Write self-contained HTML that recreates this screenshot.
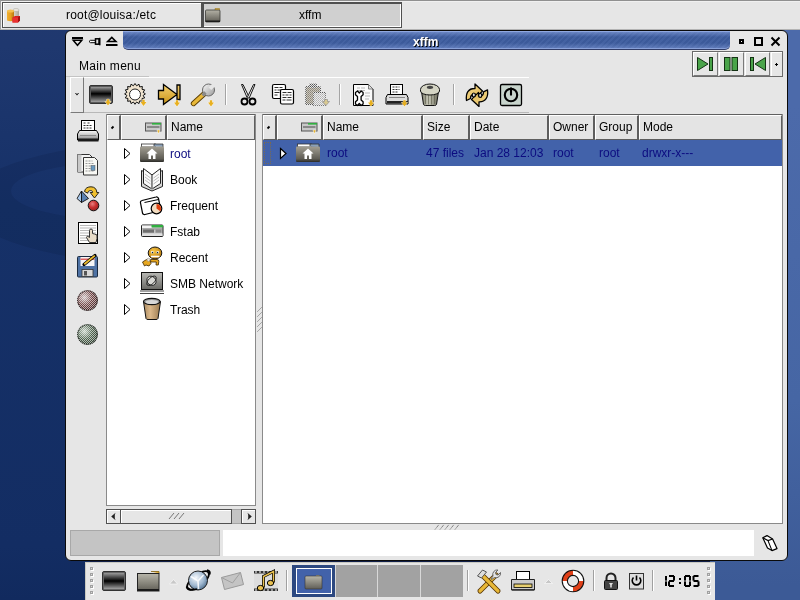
<!DOCTYPE html>
<html><head><meta charset="utf-8">
<style>
*{margin:0;padding:0;box-sizing:border-box}
html,body{width:800px;height:600px;overflow:hidden}
body{position:relative;font-family:"Liberation Sans",sans-serif;font-size:12px;color:#000;
background:#101e48}
.a{position:absolute}
svg{position:absolute;overflow:visible}
.t{position:absolute;white-space:nowrap;line-height:14px;will-change:transform}
.hd{position:absolute;top:0;height:25px;background:#e4e4e4;border-top:1px solid #fff;border-left:1px solid #fff;border-right:2px solid #5e5e5e;border-bottom:1px solid #5e5e5e}
.tri{position:absolute;width:0;height:0;border-top:5px solid transparent;border-bottom:5px solid transparent;border-left:6px solid #000}
.tri:after{content:"";position:absolute;left:-5px;top:-3px;border-top:3px solid transparent;border-bottom:3px solid transparent;border-left:3.5px solid #fff}
.lb{position:absolute;color:#000;line-height:14px;white-space:nowrap;will-change:transform}
.bl{color:#0c0c80}
</style></head><body>

<div class="a" style="left:0;top:0;width:90px;height:600px;background:linear-gradient(to bottom,#21396f 0px,#1f386f 45px,#163168 205px,#132d63 545px,#112a5e 600px)"></div>
<div class="a" style="left:710px;top:0;width:90px;height:600px;background:linear-gradient(to bottom,#4c6aaa 0px,#4c6aaa 105px,#4666a4 400px,#3c5a96 585px,#3c5a96 600px)"></div>
<svg style="left:0;top:0" width="66" height="600" viewBox="0 0 66 600"><path d="M-35 203a209 62 0 1 0 418 0a209 62 0 1 0-418 0zM11 191a100 28 0 1 0 200 0a100 28 0 1 0-200 0z" fill="#000820" fill-rule="evenodd" opacity=".1"/></svg>
<!-- ============ top panel ============ -->
<div class="a" style="left:0;top:0;width:800px;height:30px;background:#e6e6e6;border-top:1px solid #909090;border-left:1px solid #a0a0a0;border-bottom:1px solid #b4b4b4;box-shadow:inset 1px 1px 0 #f0f0f0"></div>
<div class="a" style="left:2px;top:2px;width:200px;height:26px;border:1px solid #505050;background:#e6e6e6;box-shadow:inset 1px 1px 0 #fff"></div>
<div class="a" style="left:202px;top:2px;width:200px;height:26px;border:1px solid #505050;background:#d0d0d0;box-shadow:inset 1px 1px 0 #505050,inset -1px -1px 0 #fff"></div>
<div class="t" style="left:66px;top:8px;letter-spacing:.2px">root@louisa:/etc</div>
<div class="t" style="left:299px;top:8px">xffm</div>
<!-- terminal-ish icon -->
<svg style="left:0;top:0" width="30" height="30" viewBox="0 0 30 30">
 <defs><linearGradient id="gOr" x1="0" y1="0" x2="1" y2="0"><stop offset="0" stop-color="#f0b030"/><stop offset=".5" stop-color="#e8a020"/><stop offset="1" stop-color="#b87810"/></linearGradient>
 <linearGradient id="gGy" x1="0" y1="0" x2="1" y2="0"><stop offset="0" stop-color="#e0dcd0"/><stop offset="1" stop-color="#a8a498"/></linearGradient></defs>
 <path d="M13 10v8h6v-8z" fill="url(#gGy)"/><ellipse cx="16" cy="10" rx="3" ry="1.6" fill="#e8e4dc" stroke="#a09c90" stroke-width=".4"/>
 <path d="M7 11v9.5q3.5 1.5 7 0V11z" fill="url(#gOr)"/><ellipse cx="10.5" cy="11" rx="3.5" ry="1.5" fill="#f4c050"/>
 <path d="M12.5 17.5l2.5-1.5h5v4.5l-2 2h-5.5z" fill="#d82020"/>
 <path d="M12.5 17.5h5.5v5h-5.5z" fill="#e83030"/>
 <path d="M18 17.5l2-1.5v4.5l-2 2z" fill="#a01010"/>
</svg>
<svg style="left:204px;top:7px" width="18" height="16" viewBox="0 0 18 16">
 <defs><linearGradient id="gTf" x1="0" y1="0" x2="0" y2="1"><stop offset="0" stop-color="#b4b2a6"/><stop offset="1" stop-color="#5e5c54"/></linearGradient></defs>
 <path d="M11 1.5h4.5v2h-4.5z" fill="#e8b840" stroke="#8a6a10" stroke-width=".5"/>
 <rect x="1.5" y="3" width="14.5" height="12" rx="1" fill="url(#gTf)" stroke="#3a3a36" stroke-width=".8"/>
 <rect x="1.5" y="13.5" width="14.5" height="1.5" fill="#1a1a1a"/>
</svg>

<!-- ============ window ============ -->
<div class="a" style="left:65px;top:30px;width:723px;height:531px;background:#e6e6e6;border:1px solid #0a0a0a;border-radius:6px"></div>
<!-- title bar -->
<div class="a" style="left:123px;top:31px;width:607px;height:19px;border-radius:0 0 5px 5px;background:linear-gradient(to bottom,rgba(140,165,225,.55) 0px,rgba(140,165,225,0) 5px,rgba(140,165,225,0) 11px,rgba(140,165,225,.5) 17px),repeating-linear-gradient(135deg,#3c5a9a 0 2px,#4462a2 2px 4px);border-top:1px solid #90a8e0;border-bottom:1px solid #303c68;box-shadow:inset 0 -1px 0 #88a0d8"></div>
<div class="t" style="left:413px;top:35px;color:#fff;font-weight:bold;text-shadow:1px 1px 0 #000">xffm</div>
<!-- title left icons -->
<svg style="left:71px;top:36px" width="14" height="12" viewBox="0 0 14 12">
 <rect x="1" y="1" width="11" height="2" fill="#000"/>
 <path d="M2.2 4.3h8.6L6.5 9.3z" fill="none" stroke="#000" stroke-width="1.5" stroke-linejoin="miter"/>
</svg>
<svg style="left:88px;top:37px" width="14" height="10" viewBox="0 0 14 10">
 <path d="M1 4.5L2.5 3.3H7.5V5.7H2.5Z" fill="#fff" stroke="#000" stroke-width="1"/>
 <rect x="7.5" y="1.8" width="3.5" height="5.4" fill="#ddd" stroke="#000" stroke-width="1.5"/>
 <rect x="11" y=".8" width="1.5" height="7.5" fill="#000"/>
</svg>
<svg style="left:105px;top:36px" width="14" height="12" viewBox="0 0 14 12">
 <path d="M2.6 5.6h8.4L6.8 1.4z" fill="none" stroke="#000" stroke-width="1.5"/>
 <rect x="1" y="8" width="11.5" height="2" fill="#000"/>
</svg>
<!-- title right buttons -->
<div class="a" style="left:739px;top:39px;width:5px;height:5px;border:2px solid #000;background:#fff"></div>
<div class="a" style="left:754px;top:37px;width:9px;height:9px;border:2px solid #000"></div>
<svg style="left:770px;top:36px" width="12" height="11" viewBox="0 0 12 11">
 <path d="M1.5 1.5l8 8M9.5 1.5l-8 8" stroke="#000" stroke-width="2"/>
</svg>

<div class="t" style="left:79px;top:59px;letter-spacing:.3px">Main menu</div>
<div class="a" style="left:66px;top:76px;width:83px;height:1px;background:#c4c4c4"></div>

<!-- media buttons -->
<div class="a" style="left:692px;top:51px;width:91px;height:26px;border:1px solid #6a6a6a;background:#e6e6e6"></div>
<div class="a" style="left:693px;top:52px;width:25px;height:24px;border-top:1px solid #fff;border-left:1px solid #fff;border-right:1px solid #7a7a7a;border-bottom:1px solid #7a7a7a"></div>
<div class="a" style="left:719px;top:52px;width:25px;height:24px;border-top:1px solid #fff;border-left:1px solid #fff;border-right:1px solid #7a7a7a;border-bottom:1px solid #7a7a7a"></div>
<div class="a" style="left:745px;top:52px;width:25px;height:24px;border-top:1px solid #fff;border-left:1px solid #fff;border-right:1px solid #7a7a7a;border-bottom:1px solid #7a7a7a"></div>
<div class="a" style="left:771px;top:52px;width:11px;height:24px;border-top:1px solid #fff;border-left:1px solid #fff"></div>
<div class="a" style="left:775px;top:64px;width:3px;height:1px;background:#000"></div><div class="a" style="left:776px;top:63px;width:1px;height:3px;background:#000"></div>
<svg style="left:696px;top:56px" width="80" height="16" viewBox="0 0 80 16">
 <path d="M1.5 1.5L12 8L1.5 14.5z" fill="#4aa44a" stroke="#143214" stroke-width="1"/>
 <rect x="13.5" y="1.5" width="3" height="13" fill="#4aa44a" stroke="#143214" stroke-width="1"/>
 <rect x="28.5" y="1.5" width="5.5" height="13" fill="#4aa44a" stroke="#143214" stroke-width="1"/>
 <rect x="36" y="1.5" width="5.5" height="13" fill="#4aa44a" stroke="#143214" stroke-width="1"/>
 <rect x="54.5" y="1.5" width="3" height="13" fill="#4aa44a" stroke="#143214" stroke-width="1"/>
 <path d="M69.5 1.5L59 8L69.5 14.5z" fill="#4aa44a" stroke="#143214" stroke-width="1"/>
</svg>

<!-- toolbar -->
<div class="a" style="left:70px;top:77px;width:14px;height:36px;border-top:1px solid #fff;border-left:1px solid #fff;border-right:1px solid #7a7a7a;border-bottom:1px solid #7a7a7a"></div>
<svg style="left:75px;top:93px" width="4" height="3" viewBox="0 0 4 3"><path d="M0 0h1l1 1.2l1-1.2h1l-2 2.5z" fill="#000"/></svg>
<div class="a" style="left:84px;top:77px;width:445px;height:1px;background:#fff"></div>
<div class="a" style="left:84px;top:112px;width:445px;height:1px;background:#b8b8b8"></div>
<svg style="left:0;top:0" width="800" height="120" viewBox="0 0 800 120">
 <defs>
  <linearGradient id="gTerm" x1="0" y1="0" x2="0" y2="1">
   <stop offset="0" stop-color="#9a9a9a"/><stop offset=".45" stop-color="#000"/><stop offset="1" stop-color="#a0a0a0"/>
  </linearGradient>
  <linearGradient id="gGold" x1="0" y1="0" x2="0" y2="1">
   <stop offset="0" stop-color="#f4d070"/><stop offset="1" stop-color="#c89418"/>
  </linearGradient>
  <g id="arr"><path d="M1.8 .3h2.4v2.2h1.8L3 6.5L0 2.5h1.8z" fill="#e8b020" stroke="#fff" stroke-width=".7" paint-order="stroke"/></g>
 </defs>
 <!-- terminal -->
 <rect x="89.5" y="85.5" width="23" height="18" rx="1.5" fill="#5a5a5a" stroke="#333" stroke-width="1"/>
 <rect x="91" y="87" width="20" height="15" fill="url(#gTerm)"/>
 <use href="#arr" x="105" y="99"/>
 <!-- gear -->
 <path d="M135 83.5l1.6 2.3 2.4-1.6.6 2.7 2.8-.4-.4 2.8 2.7.6-1.6 2.4 2.3 1.6-2.3 1.6 1.6 2.4-2.7.6.4 2.8-2.8-.4-.6 2.7-2.4-1.6-1.6 2.3-1.6-2.3-2.4 1.6-.6-2.7-2.8.4.4-2.8-2.7-.6 1.6-2.4-2.3-1.6 2.3-1.6-1.6-2.4 2.7-.6-.4-2.8 2.8.4.6-2.7 2.4 1.6z" fill="#f0e4d0" stroke="#111" stroke-width="1"/>
 <circle cx="135" cy="94.5" r="5.5" fill="#fff" stroke="#222" stroke-width="1"/>
 <use href="#arr" x="140.5" y="99.5"/>
 <!-- jump -->
 <path d="M158.5 90.5H163.5V84.5L177 94.5V85H180V99.5H177V94.5L163.5 104.5V99H158.5Z" fill="url(#gGold)" stroke="#000" stroke-width="1.3" stroke-linejoin="miter"/>
 <use href="#arr" x="174" y="100"/>
 <!-- wrench -->
 <defs><linearGradient id="gSil" x1="0" y1="0" x2="1" y2="1"><stop offset="0" stop-color="#fafafa"/><stop offset="1" stop-color="#9a9a9a"/></linearGradient></defs>
 <path d="M193.5 103.5l11-10" stroke="#5a3c00" stroke-width="5.4" stroke-linecap="round"/>
 <path d="M193.5 103.5l11-10" stroke="#e8b838" stroke-width="3.6" stroke-linecap="round"/>
 <circle cx="208.5" cy="90" r="6" fill="url(#gSil)" stroke="#666" stroke-width="1"/>
 <rect x="209.8" y="80" width="3.8" height="9.5" fill="#e6e6e6" transform="rotate(45 211.7 87)"/>
 <path d="M202.5 95.5l3-3" stroke="#8a8a8a" stroke-width="3.2"/>
 <use href="#arr" x="208" y="100"/>
 <!-- sep -->
 <rect x="225" y="84" width="1" height="21" fill="#a4a4a4"/><rect x="226" y="84" width="1" height="21" fill="#fff"/>
 <!-- scissors -->
 <path d="M241.5 84.5l1.5 0 6 12.5-1.5 1.5z" fill="#fff" stroke="#111" stroke-width="1"/>
 <path d="M255 84.5l-1.5 0-6 12.5 1.5 1.5z" fill="#fff" stroke="#111" stroke-width="1"/>
 <circle cx="244.5" cy="101.5" r="3" fill="none" stroke="#000" stroke-width="1.8"/>
 <circle cx="252.5" cy="101.5" r="3" fill="none" stroke="#000" stroke-width="1.8"/>
 <!-- copy -->
 <rect x="272.5" y="84.5" width="13" height="14" rx="1.5" fill="#fff" stroke="#000" stroke-width="1.2"/>
 <path d="M274.5 87.5h4M279.5 87.5h3M274.5 90h2M277.5 90h5M274.5 92.5h5M274.5 95h3" stroke="#333" stroke-width="1.1"/>
 <rect x="280.5" y="89.5" width="13" height="14.5" rx="1.5" fill="#fff" stroke="#000" stroke-width="1.2"/>
 <path d="M282.5 92.5h4M287.5 92.5h4M282.5 95h2M285.5 95h3M289.5 95h2M282.5 97.5h4M287.5 97.5h4M282.5 100h3M286.5 100h5" stroke="#333" stroke-width="1.1"/>
 <!-- paste disabled -->
 <defs><pattern id="dth2" width="2" height="2" patternUnits="userSpaceOnUse"><rect width="2" height="2" fill="#e6e6e6"/><rect width="1" height="1" fill="#555"/><rect x="1" y="1" width="1" height="1" fill="#777"/></pattern></defs>
 <rect x="305" y="86" width="16" height="19" rx="1.5" fill="url(#dth2)"/>
 <rect x="306.5" y="87.5" width="13" height="16" fill="#b4ac98" opacity=".55"/>
 <rect x="309" y="83.5" width="8" height="4.5" rx="1" fill="url(#dth2)"/>
 <rect x="313" y="92" width="13" height="14" fill="url(#dth2)"/>
 <rect x="314" y="93" width="11" height="12" fill="#f0f0f0" opacity=".6"/>
 <path d="M324.5 99.5h3v2h2l-3.5 4l-3.5-4h2z" fill="#d8c890" stroke="#888" stroke-width=".6"/>
 <!-- sep -->
 <rect x="339" y="84" width="1" height="21" fill="#a4a4a4"/><rect x="340" y="84" width="1" height="21" fill="#fff"/>
 <!-- doc wrench -->
 <path d="M353.5 84.5h15l4.5 4.5v16.5h-19.5z" fill="#fafafa" stroke="#000" stroke-width="1"/>
 <path d="M368.5 84.5v4.5h4.5" fill="#ddd" stroke="#666" stroke-width=".8"/>
 <path d="M357 88h3M361 88h4M357 90.5h8M365 93h5M365 96h5M365 99h4" stroke="#b8b8b8" stroke-width="1"/>
 <path d="M355.5 92.5l2-1.5 1.8 2 1.8-2 2 1.5v2.2l-2 1.8v3.5l2 1.8v2.2l-2 1.5-1.8-2-1.8 2-2-1.5v-2.2l2-1.8v-3.5l-2-1.8z" fill="#fff" stroke="#000" stroke-width="1.3" stroke-linejoin="round"/>
 <use href="#arr" x="368" y="100"/>
 <!-- printer -->
 <rect x="390.5" y="84.5" width="12" height="10" fill="#fff" stroke="#000" stroke-width="1"/>
 <path d="M392.5 87h7M392.5 89.5h7M392.5 92h5" stroke="#333" stroke-width="1" stroke-dasharray="2 1"/>
 <path d="M387.5 94.5h19l1.5 3v6.5h-22v-6.5z" fill="#dcdcdc" stroke="#000" stroke-width="1"/>
 <rect x="387" y="101" width="21" height="2.5" fill="#222"/>
 <path d="M389 97.5h16" stroke="#888" stroke-width="1"/>
 <use href="#arr" x="401.5" y="100"/>
 <!-- trash -->
 <defs><linearGradient id="gTb" x1="0" y1="0" x2="1" y2="0"><stop offset="0" stop-color="#7a7a6a"/><stop offset=".4" stop-color="#c8c8b8"/><stop offset="1" stop-color="#6a6a5a"/></linearGradient></defs>
 <path d="M421.5 91.5l2 13a2 1.5 0 0 0 2 1h9a2 1.5 0 0 0 2-1l2-13z" fill="url(#gTb)" stroke="#111" stroke-width="1"/>
 <path d="M425.5 94v10M428.5 94.5v10M431.5 94.5v10M434.5 94v10" stroke="#5a5a4a" stroke-width=".9" opacity=".7"/>
 <path d="M420.5 91a9.5 4 0 0 0 19 0v-1.5a9.5 5.5 0 0 0-19 0z" fill="#d4d4c4" stroke="#111" stroke-width="1"/>
 <ellipse cx="430" cy="87.3" rx="3.2" ry="1.6" fill="#444"/>
 <!-- sep -->
 <rect x="453" y="84" width="1" height="21" fill="#a4a4a4"/><rect x="454" y="84" width="1" height="21" fill="#fff"/>
 <!-- refresh -->
 <defs><linearGradient id="gRf" x1="0" y1="0" x2="1" y2="1"><stop offset="0" stop-color="#f4d890"/><stop offset="1" stop-color="#e0b850"/></linearGradient></defs>
 <g id="rfA"><path d="M466.5 100.5C465.5 93 468.5 88.5 474.5 88.5L475 88.5V84L482.5 91L475.5 98V94.5H474C471.5 94.5 470.5 96.5 470.5 98.5z" fill="url(#gRf)" stroke="#000" stroke-width="1.3" stroke-linejoin="round"/></g>
 <use href="#rfA" transform="rotate(180 477 95.2)"/>
 <ellipse cx="473.8" cy="95" rx="1.6" ry="2" fill="#ddd" stroke="#000" stroke-width="1.2"/>
 <ellipse cx="480.2" cy="95.4" rx="1.6" ry="2" fill="#ddd" stroke="#000" stroke-width="1.2"/>
 <!-- power -->
 <rect x="500.5" y="84.5" width="21" height="21" rx="1.5" fill="#c8d4cc" stroke="#000" stroke-width="1.3"/>
 <circle cx="511" cy="95" r="6.2" fill="none" stroke="#000" stroke-width="2.1"/>
 <path d="M511 87.5v8" stroke="#000" stroke-width="2.1"/>
</svg>


<svg style="left:0;top:0" width="110" height="360" viewBox="0 0 110 360">
 <defs>
  <linearGradient id="gPr" x1="0" y1="0" x2="0" y2="1"><stop offset="0" stop-color="#fafafa"/><stop offset="1" stop-color="#8a8a8a"/></linearGradient>
  <radialGradient id="gRed" cx=".4" cy=".35" r=".7"><stop offset="0" stop-color="#e88080"/><stop offset=".5" stop-color="#c83030"/><stop offset="1" stop-color="#902020"/></radialGradient>
  <radialGradient id="gBR" cx=".35" cy=".35" r=".75"><stop offset="0" stop-color="#d0c4c4"/><stop offset=".5" stop-color="#704444"/><stop offset="1" stop-color="#402222"/></radialGradient>
  <radialGradient id="gBG" cx=".35" cy=".35" r=".75"><stop offset="0" stop-color="#c8d4c8"/><stop offset=".5" stop-color="#4e644e"/><stop offset="1" stop-color="#2a3a2a"/></radialGradient>
  <pattern id="dith" width="2" height="2" patternUnits="userSpaceOnUse"><rect width="1" height="1" fill="#fff" opacity=".6"/><rect x="1" y="1" width="1" height="1" fill="#fff" opacity=".6"/></pattern>
 </defs>
 <!-- printer -->
 <rect x="81.5" y="120.5" width="13" height="11" fill="#fff" stroke="#000" stroke-width="1"/>
 <path d="M83.5 123h3M87.5 123h2M83.5 125.5h9M83.5 128h9" stroke="#333" stroke-width="1" stroke-dasharray="2 1"/>
 <path d="M79.5 130.5h17l2 3.5v6h-21v-6z" fill="url(#gPr)" stroke="#000" stroke-width="1"/>
 <path d="M80.5 135.5h15" stroke="#555" stroke-width="1" stroke-dasharray="1 1"/>
 <rect x="78" y="138.5" width="20.5" height="3" fill="#1a1a1a"/>
 <!-- copy -->
 <path d="M77.5 154.5h12l3 3v14.5h-15z" fill="#f4f4f4" stroke="#333" stroke-width="1"/>
 <rect x="77.5" y="154.5" width="4" height="17.5" fill="#c8c8c8"/>
 <path d="M83.5 157.5h11l3 3v14.5h-14z" fill="#f8f8f4" stroke="#333" stroke-width="1"/>
 <path d="M85.5 161h7M85.5 163.5h9M85.5 166h5M85.5 168.5h5M85.5 171h9" stroke="#999" stroke-width="1" stroke-dasharray="2 1"/>
 <rect x="91" y="165.5" width="4" height="5" fill="#6a9ac0" stroke="#555" stroke-width=".5"/>
 <!-- shapes -->
 <path d="M81.5 191L77 198.5L81.5 202.5z" fill="#a8c8ec" stroke="#111" stroke-width=".9" stroke-linejoin="round"/>
 <path d="M81.5 191L88.5 198.5L81.5 202.5z" fill="#5a80b0" stroke="#111" stroke-width=".9" stroke-linejoin="round"/>
 <path d="M84.5 191.5C85 188 88 186.8 91 186.8C94.5 186.8 96.8 189 96.8 192.5H98.8L94.5 198L90.2 192.5H92.6C92.6 191.2 92 190.6 90.6 190.6C88.8 190.6 87.8 191.6 87.8 193.2Z" fill="#f0c030" stroke="#111" stroke-width=".9" stroke-linejoin="round"/>
 <circle cx="93.5" cy="205.5" r="5.3" fill="url(#gRed)" stroke="#111" stroke-width="1"/>
 <!-- doc hand -->
 <rect x="78.5" y="222.5" width="19" height="21" fill="#fff" stroke="#000" stroke-width="1"/>
 <path d="M80 225.5h16M80 228h16M80 230.5h16M80 233h16M80 235.5h16M80 238h16M80 240.5h16" stroke="#b8b8b8" stroke-width="1.2"/>
 <path d="M89.5 230.5v7l-2-1.5l-1 1.5l3 5h6.5l1-4v-3.5l-2.5-1l-2-.5v-3a1 1 0 0 0-3 0z" fill="#e8dcc8" stroke="#333" stroke-width="1"/>
 <!-- floppy -->
 <rect x="77.5" y="256.5" width="20" height="20.5" rx="1" fill="#4e72a4" stroke="#1a2a40" stroke-width="1"/>
 <rect x="80.5" y="257" width="14" height="9" fill="#f6f6f6"/>
 <rect x="80.5" y="258.5" width="14" height="1.5" fill="#e06060"/>
 <rect x="82" y="269.5" width="11" height="7" fill="#d8d8d8" stroke="#333" stroke-width=".8"/>
 <rect x="84" y="271" width="3" height="4.5" fill="#555"/>
 <path d="M84 264.5l11-9" stroke="#000" stroke-width="3.2" stroke-linecap="round"/>
 <path d="M84.3 264.2l10.5-8.6" stroke="#f0c030" stroke-width="1.8"/>
 <!-- balls -->
 <circle cx="87.5" cy="300.5" r="10.3" fill="url(#gBR)"/>
 <circle cx="87.5" cy="300.5" r="10.3" fill="url(#dith)"/><circle cx="87.5" cy="300.5" r="9.8" fill="none" stroke="#111" stroke-width="1.2" stroke-dasharray="1 1" opacity=".8"/>
 <circle cx="87.5" cy="334.5" r="10.3" fill="url(#gBG)"/>
 <circle cx="87.5" cy="334.5" r="10.3" fill="url(#dith)"/><circle cx="87.5" cy="334.5" r="9.8" fill="none" stroke="#111" stroke-width="1.2" stroke-dasharray="1 1" opacity=".8"/>
</svg>


<!-- ============ tree pane ============ -->
<div class="a" style="left:106px;top:114px;width:150px;height:392px;background:#fff;border:1px solid #8a8a8a"></div>
<div class="a" style="left:107px;top:114px;width:148px;height:26px;border-top:1px solid #606060">
 <div class="hd" style="left:0;width:14px"></div>
 <div class="hd" style="left:14px;width:46px"></div>
 <div class="hd" style="left:60px;width:88px;border-right:1px solid #5e5e5e"></div>
</div>
<div class="lb" style="left:171px;top:120px">Name</div>
<svg style="left:0;top:0" width="260" height="330" viewBox="0 0 260 330">
 <defs>
  <linearGradient id="gFold" x1="0" y1="0" x2="0" y2="1"><stop offset="0" stop-color="#a29e92"/><stop offset=".8" stop-color="#5e5c54"/><stop offset="1" stop-color="#2a2a26"/></linearGradient>
  <linearGradient id="gMon" x1="0" y1="0" x2="0" y2="1"><stop offset="0" stop-color="#b8b8b4"/><stop offset="1" stop-color="#6a6a66"/></linearGradient>
  <linearGradient id="gDrv" x1="0" y1="0" x2="0" y2="1"><stop offset="0" stop-color="#e0e0e0"/><stop offset=".5" stop-color="#8a8a8a"/><stop offset="1" stop-color="#c8c8c8"/></linearGradient>
  <radialGradient id="gSm" cx=".4" cy=".35" r=".7"><stop offset="0" stop-color="#f8c848"/><stop offset="1" stop-color="#b87808"/></radialGradient>
  <linearGradient id="gTr" x1="0" y1="0" x2="1" y2="0"><stop offset="0" stop-color="#a88a60"/><stop offset=".4" stop-color="#dcb88a"/><stop offset="1" stop-color="#9a7a50"/></linearGradient>
  <g id="tri"><path d="M.5 .5L6 5.5L.5 10.5z" fill="#fff" stroke="#000" stroke-width="1"/></g>
  <g id="homef">
   <path d="M1 3.5h13v-1h9.5v3" fill="none"/>
   <rect x="1.5" y="1" width="14" height="3" fill="#fff" stroke="#333" stroke-width=".8"/>
   <path d="M14 3.5v-2.5h9v3" fill="#8aa0b8" stroke="#333" stroke-width=".8"/>
   <rect x="0" y="3.5" width="24" height="15.5" rx="1" fill="url(#gFold)"/>
   <path d="M12 5.5l5.5 5h-2v5.5h-2.5v-3.5h-2v3.5h-2.5v-5.5h-2z" fill="#fff"/>
  </g>
 </defs>
 <!-- triangles -->
 <use href="#tri" x="124" y="148"/>
 <use href="#tri" x="124" y="174"/>
 <use href="#tri" x="124" y="200"/>
 <use href="#tri" x="124" y="226"/>
 <use href="#tri" x="124" y="252"/>
 <use href="#tri" x="124" y="278"/>
 <use href="#tri" x="124" y="304"/>
 <!-- root folder -->
 <use href="#homef" x="140" y="143"/>
 <!-- book -->
 <path d="M141.5 170.5l10.5 4.5l10.5-4.5v16l-10.5 4.5l-10.5-4.5z" fill="#d8d8d8" stroke="#222" stroke-width="1"/>
 <path d="M143.5 168.5l8.5 6.5v14l-8.5-5.5z" fill="#fafafa" stroke="#222" stroke-width="1"/>
 <path d="M160.5 168.5l-8.5 6.5v14l8.5-5.5z" fill="#fafafa" stroke="#222" stroke-width="1"/>
 <path d="M145 174l5.5 4M145 177l5.5 4M145 180l5.5 4M159 174l-5.5 4M159 177l-5.5 4M159 180l-5.5 4" stroke="#bbb" stroke-width="1"/>
 <rect x="151.3" y="175" width="1.4" height="14" fill="#999"/>
 <!-- frequent -->
 <path d="M142 200.5l14-3.5a2 2 0 0 1 2.5 1.5l2 10a2 2 0 0 1-1.5 2.5l-14 3.5a2 2 0 0 1-2.5-1.5l-2-10a2 2 0 0 1 1.5-2.5z" fill="#fff" stroke="#000" stroke-width="1.2"/>
 <path d="M144.5 202.5l14-3" fill="none" stroke="#000" stroke-width="1"/>
 <circle cx="156.5" cy="208.5" r="5.3" fill="#f2dcc0" stroke="#000" stroke-width="1.2"/>
 <path d="M156.5 208.5v-4.6a4.6 4.6 0 0 1 3.8 7.3z" fill="#e04010"/>
 <!-- fstab -->
 <rect x="141.5" y="225" width="21.5" height="11.5" rx="1" fill="#c4c4c4" stroke="#222" stroke-width="1"/>
 <rect x="142" y="225.5" width="10" height="2.5" fill="#f4f4f4"/>
 <rect x="151.5" y="225" width="11.5" height="2.4" fill="#30b040"/>
 <rect x="142.5" y="228.5" width="19.5" height="1" fill="#909090"/>
 <rect x="143" y="229.5" width="11" height="3.2" fill="#6e6e6e"/>
 <rect x="155.5" y="229.5" width="6" height="3.2" fill="#8a8a8a"/>
 <rect x="142" y="233.5" width="20.5" height="2.5" fill="#e0e0e0"/>
 <!-- recent smiley -->
 <ellipse cx="155" cy="253" rx="6.8" ry="6" fill="url(#gSm)" stroke="#111" stroke-width="1"/>
 <circle cx="152.3" cy="252.3" r="1.3" fill="#fff"/><circle cx="157.7" cy="252.3" r="1.3" fill="#fff"/>
 <circle cx="152.5" cy="252.6" r=".8" fill="#123"/><circle cx="157.5" cy="252.6" r=".8" fill="#123"/>
 <path d="M151 256.5h8.5" stroke="#fff" stroke-width="1.6"/>
 <path d="M150.5 259.5h6.5q2 0 1.8 2l-.5 3.5h-2.3l.3-3h-5.5z" fill="#e8a820" stroke="#3a2400" stroke-width=".8"/>
 <path d="M142.5 262l4-2.5l3.5 1l1 3l-2 2.5l-3-1l-1.5 1z" fill="#e8a820" stroke="#3a2400" stroke-width=".8"/>
 <circle cx="148.5" cy="259.8" r="1.6" fill="#eee8d8" stroke="#777" stroke-width=".5"/>
 <!-- smb -->
 <rect x="141.5" y="272.5" width="21" height="17" fill="url(#gMon)" stroke="#111" stroke-width="1"/>
 <ellipse cx="151.5" cy="280.8" rx="5" ry="4.2" fill="#d8d8d4" stroke="#222" stroke-width=".9" transform="rotate(45 151.5 280.8)"/>
 <ellipse cx="151.5" cy="280.8" rx="6" ry="3" fill="none" stroke="#222" stroke-width=".9" transform="rotate(-45 151.5 280.8)"/>
 <rect x="140" y="290.5" width="24" height="1" fill="#444"/>
 <rect x="140" y="293" width="24" height="1" fill="#444"/>
 <!-- trash -->
 <path d="M143.5 301.5l2.5 17a2 1.5 0 0 0 2 1h8a2 1.5 0 0 0 2-1l2.5-17z" fill="url(#gTr)" stroke="#111" stroke-width="1"/>
 <ellipse cx="151.8" cy="301.5" rx="8.3" ry="3.2" fill="#9a9a9a" stroke="#111" stroke-width="1.2"/>
 <ellipse cx="151.8" cy="302" rx="6.3" ry="2" fill="#d8d8d8"/>
</svg>
<div class="lb bl" style="left:170px;top:147px">root</div>
<div class="lb" style="left:170px;top:173px">Book</div>
<div class="lb" style="left:170px;top:199px">Frequent</div>
<div class="lb" style="left:170px;top:225px">Fstab</div>
<div class="lb" style="left:170px;top:251px">Recent</div>
<div class="lb" style="left:170px;top:277px">SMB Network</div>
<div class="lb" style="left:170px;top:303px">Trash</div>


<!-- tree scrollbar -->
<div class="a" style="left:106px;top:509px;width:150px;height:15px;background:#c4c4c4;border:1px solid #a4a4a4"></div>
<div class="a" style="left:106px;top:509px;width:15px;height:15px;background:#e6e6e6;border:1px solid #505050;box-shadow:inset 1px 1px 0 #fff"></div>
<div class="a" style="left:120px;top:509px;width:112px;height:15px;background:#e6e6e6;border:1px solid #505050;box-shadow:inset 1px 1px 0 #fff"></div>
<div class="a" style="left:241px;top:509px;width:15px;height:15px;background:#e6e6e6;border:1px solid #505050;box-shadow:inset 1px 1px 0 #fff"></div>
<svg style="left:110px;top:512px" width="8" height="9" viewBox="0 0 8 9"><path d="M5.5 .8L1.2 4.5L5.5 8.2L4.8 6.2V2.8z" fill="#222"/></svg>
<svg style="left:246px;top:512px" width="8" height="9" viewBox="0 0 8 9"><path d="M1.5 .8L5.8 4.5L1.5 8.2L2.2 6.2V2.8z" fill="#222"/></svg>
<svg style="left:168px;top:512px" width="18" height="8" viewBox="0 0 18 8"><path d="M1 7L6 1M6 7L11 1M11 7L16 1" stroke="#777" stroke-width="1"/></svg>

<!-- vertical splitter -->

<svg style="left:257px;top:306px" width="6" height="27" viewBox="0 0 6 27"><path d="M.5 5.5L4.5 1.5M.5 10.5L4.5 6.5M.5 15.5L4.5 11.5M.5 20.5L4.5 16.5M.5 25.5L4.5 21.5" stroke="#707070" stroke-width="1" stroke-dasharray="1.1 .5"/></svg>

<!-- ============ right pane ============ -->
<div class="a" style="left:262px;top:114px;width:521px;height:410px;background:#fff;border:1px solid #8a8a8a"></div>
<div class="a" style="left:263px;top:114px;width:519px;height:26px;border-top:1px solid #606060">
 <div class="hd" style="left:0;width:14px"></div>
 <div class="hd" style="left:14px;width:46px"></div>
 <div class="hd" style="left:60px;width:100px"></div>
 <div class="hd" style="left:160px;width:47px"></div>
 <div class="hd" style="left:207px;width:79px"></div>
 <div class="hd" style="left:286px;width:46px"></div>
 <div class="hd" style="left:332px;width:44px"></div>
 <div class="hd" style="left:376px;width:143px;border-right:1px solid #5e5e5e"></div>
</div>
<div class="lb" style="left:327px;top:120px">Name</div>
<div class="lb" style="left:427px;top:120px">Size</div>
<div class="lb" style="left:474px;top:120px">Date</div>
<div class="lb" style="left:553px;top:120px">Owner</div>
<div class="lb" style="left:599px;top:120px">Group</div>
<div class="lb" style="left:643px;top:120px">Mode</div>
<div class="a" style="left:263px;top:140px;width:519px;height:26px;background:#4262aa"></div>
<div class="a" style="left:264px;top:142px;width:7px;height:22px;border:1px dotted #7a6a50"></div>
<div class="lb bl" style="left:327px;top:146px">root</div>
<div class="lb bl" style="left:426px;top:146px">47 files</div>
<div class="lb bl" style="left:474px;top:146px">Jan 28 12:03</div>
<div class="lb bl" style="left:553px;top:146px">root</div>
<div class="lb bl" style="left:599px;top:146px">root</div>
<div class="lb bl" style="left:642px;top:146px">drwxr-x---</div>
<svg style="left:0;top:0" width="330" height="170" viewBox="0 0 330 170">
 <defs>
  <g id="hdrv">
   <rect x=".5" y=".5" width="15.5" height="8" fill="#c8c8c8" stroke="#555" stroke-width="1"/>
   <rect x="7" y=".5" width="9" height="1.6" fill="#30b040"/>
   <rect x="2" y="3.5" width="12.5" height="2" fill="#888"/>
   <path d="M12 7.5h3l-1.5 4z" fill="#e8b020" stroke="#fff" stroke-width=".5"/>
  </g>
 </defs>
 <use href="#hdrv" x="145" y="122.5"/>
 <use href="#hdrv" x="301" y="122.5"/>
 <path d="M111.5 128.5l2-2" stroke="#000" stroke-width="1.8"/>
 <path d="M267.5 128.5l2-2" stroke="#000" stroke-width="1.8"/>
 <path d="M280.5 148.5L286 153.5L280.5 158.5z" fill="#fff" stroke="#000" stroke-width="1.2"/>
 <use href="#homef" x="296" y="143"/>
</svg>


<!-- horizontal splitter -->
<svg style="left:434px;top:524px" width="28" height="7" viewBox="0 0 28 7"><path d="M1 5.5L5 .5M6 5.5L10 .5M11 5.5L15 .5M16 5.5L20 .5M21 5.5L25 .5" stroke="#707070" stroke-width="1" stroke-dasharray="1.1 .5"/></svg>

<!-- status -->
<div class="a" style="left:70px;top:530px;width:150px;height:26px;background:#c4c4c4;border:1px solid #a8a8a8"></div>
<div class="a" style="left:223px;top:530px;width:531px;height:26px;background:#fff"></div>
<svg style="left:0;top:0" width="800" height="600" viewBox="0 0 800 600">
 <path d="M762.8 537.8L767 535.6L772.6 539L777 548.6L772 550.6L767.5 548Z" fill="#fff" stroke="#000" stroke-width="1.2" stroke-linejoin="round"/>
 <path d="M762.8 537.8L768 540.6L772.6 539M768 540.6L772 550.6" fill="none" stroke="#000" stroke-width="1.1"/>
</svg>

<!-- ============ bottom taskbar ============ -->
<div class="a" style="left:85px;top:562px;width:630px;height:38px;background:#e6e6e6;border-top:1px solid #c8c8c0;border-left:1px solid #c8c8c0"></div>
<svg style="left:0;top:0" width="800" height="600" viewBox="0 0 800 600">
 <defs>
  <linearGradient id="gT2" x1="0" y1="0" x2="0" y2="1"><stop offset="0" stop-color="#9a9a9a"/><stop offset=".5" stop-color="#000"/><stop offset="1" stop-color="#a0a0a0"/></linearGradient>
  <linearGradient id="gF2" x1="0" y1="0" x2="0" y2="1"><stop offset="0" stop-color="#b8b6aa"/><stop offset="1" stop-color="#605e56"/></linearGradient>
  <radialGradient id="gGlb" cx=".4" cy=".35" r=".7"><stop offset="0" stop-color="#f4f8fc"/><stop offset=".6" stop-color="#a0b8d0"/><stop offset="1" stop-color="#4a6a8a"/></radialGradient>
  <g id="dots"><rect x="1" y="1" width="3" height="3" fill="#fff"/><rect x="0" y="0" width="3" height="3" fill="#a0a0a0"/><rect x="1" y="1" width="1" height="1" fill="#d8d8d8"/></g>
 </defs>
 <!-- handle dots -->
 <use href="#dots" x="90" y="567"/><use href="#dots" x="90" y="573"/><use href="#dots" x="90" y="579"/><use href="#dots" x="90" y="585"/><use href="#dots" x="90" y="591"/>
 <use href="#dots" x="707" y="567"/><use href="#dots" x="707" y="573"/><use href="#dots" x="707" y="579"/><use href="#dots" x="707" y="585"/><use href="#dots" x="707" y="591"/>
 <!-- terminal -->
 <rect x="102.5" y="571.5" width="23" height="19" rx="1.5" fill="#666" stroke="#333" stroke-width="1"/>
 <rect x="104" y="573" width="20" height="16" fill="url(#gT2)"/>
 <!-- folder -->
 <path d="M151 571.5h8v2" fill="#e0b040" stroke="#806010" stroke-width=".8"/>
 <rect x="137.5" y="573.5" width="21.5" height="17.5" fill="url(#gF2)" stroke="#222" stroke-width="1"/>
 <rect x="137.5" y="589" width="21.5" height="2" fill="#1a1a1a"/>
 <!-- small triangle -->
 <path d="M169.5 584h8l-4-4.5z" fill="#c8c8c8" stroke="#fff" stroke-width=".6"/>
 <!-- globe -->
 <ellipse cx="198" cy="580.5" rx="13.2" ry="5.6" transform="rotate(-38 198 580.5)" fill="none" stroke="#000" stroke-width="1.8"/>
 <circle cx="198" cy="580.5" r="9.5" fill="url(#gGlb)" stroke="#1a1a1a" stroke-width="1"/>
 <path d="M191 576.5l7 4.5l5.5-6M198 581l.5 8" stroke="#fff" stroke-width="1.6" fill="none" opacity=".85"/>
 <path d="M187.6 590.2A13.2 5.6 0 0 0 208.4 570.8" transform="rotate(0)" fill="none" stroke="none"/>
 <path d="M186.5 586.5Q189 591.5 197 589M209.5 574.5Q211 571 207 570" fill="none" stroke="#000" stroke-width="1.8"/>
 <!-- mail -->
 <path d="M221.5 577.5l19-5l3 12l-19 5z" fill="#c4c4c4" stroke="#9a9a9a" stroke-width="1"/>
 <path d="M221.5 577.5l11 5.5l8-10.5" fill="none" stroke="#a0a0a0" stroke-width="1"/>
 <!-- music -->
 <rect x="254" y="571" width="24" height="20" fill="#ddd"/>
 <rect x="254" y="571" width="24" height="2.5" fill="#333"/>
 <rect x="254" y="588.5" width="24" height="2.5" fill="#333"/>
 <path d="M255 572h2M259 572h2M263 572h2M267 572h2M271 572h2M275 572h2M255 590h2M259 590h2M263 590h2M267 590h2M271 590h2M275 590h2" stroke="#fff" stroke-width="1"/>
 <path d="M263.5 587.5v-11l10-5v11" fill="none" stroke="#000" stroke-width="3"/>
 <path d="M263.5 587.5v-11l10-5v11" fill="none" stroke="#e8c050" stroke-width="1.5"/>
 <ellipse cx="260.5" cy="588" rx="3.2" ry="2.6" fill="#e8c050" stroke="#000" stroke-width="1"/>
 <ellipse cx="270.5" cy="583" rx="3.2" ry="2.6" fill="#e8c050" stroke="#000" stroke-width="1"/>
 <!-- separators -->
 <rect x="286" y="570" width="1" height="21" fill="#a0a0a0"/><rect x="287" y="570" width="1" height="21" fill="#fff"/>
 <rect x="467" y="570" width="1" height="21" fill="#a0a0a0"/><rect x="468" y="570" width="1" height="21" fill="#fff"/>
 <rect x="593" y="570" width="1" height="21" fill="#a0a0a0"/><rect x="594" y="570" width="1" height="21" fill="#fff"/>
 <rect x="652" y="570" width="1" height="21" fill="#a0a0a0"/><rect x="653" y="570" width="1" height="21" fill="#fff"/>
 <!-- pager -->
 <rect x="292" y="565" width="171" height="32" fill="#a2a2a2"/>
 <rect x="292" y="565" width="43" height="32" fill="#2c4880"/>
 <rect x="296.5" y="568.5" width="35" height="25" fill="#4262aa" stroke="#fff" stroke-width="1"/>
 <rect x="335" y="565" width="1" height="32" fill="#d8d8d8"/>
 <rect x="377" y="565" width="1" height="32" fill="#d8d8d8"/>
 <rect x="420" y="565" width="1" height="32" fill="#d8d8d8"/>
 <path d="M309 576.5h7v-1h3.5v1" fill="#e0b040"/>
 <rect x="305" y="576" width="17" height="13" rx="1" fill="url(#gF2)" stroke="#333" stroke-width=".6"/>
 <!-- tools -->
 <path d="M480 591l16-16" stroke="#553300" stroke-width="5" stroke-linecap="round"/>
 <path d="M480 591l16-16" stroke="#e8b838" stroke-width="3.2" stroke-linecap="round"/>
 <path d="M498 591l-16-16" stroke="#553300" stroke-width="5" stroke-linecap="round"/>
 <path d="M498 591l-16-16" stroke="#e8b838" stroke-width="3.2" stroke-linecap="round"/>
 <path d="M477.5 576l5-6l4 2l-5 6z" fill="#ddd" stroke="#555" stroke-width="1"/>
 <path d="M491 579l2-3a4.5 4.5 0 0 1 5-6l-2.5 2.5 .5 2 2 .5 2.5-2.5a4.5 4.5 0 0 1-6 5l-3 2z" fill="#e4e4e4" stroke="#666" stroke-width="1"/>
 <!-- printer -->
 <rect x="516.5" y="571.5" width="13" height="8" fill="#fff" stroke="#000" stroke-width="1"/>
 <path d="M511.5 579.5h23v10.5h-23z" fill="#ccc" stroke="#222" stroke-width="1"/>
 <rect x="514" y="584" width="18" height="3.5" fill="#e8d070" stroke="#000" stroke-width=".8"/>
 <rect x="512" y="589" width="22" height="1.5" fill="#333"/>
 <path d="M544.5 583.5h8l-4-4z" fill="#c8c8c8" stroke="#fff" stroke-width=".6"/>
 <!-- lifebuoy -->
 <circle cx="573" cy="581" r="8.25" fill="none" stroke="#fff" stroke-width="5.5"/>
 <path d="M564.75 581A8.25 8.25 0 0 1 573 572.75M581.25 581A8.25 8.25 0 0 1 573 589.25" fill="none" stroke="#e04018" stroke-width="5.5"/>
 <circle cx="573" cy="581" r="10.8" fill="none" stroke="#111" stroke-width="1.1"/>
 <circle cx="573" cy="581" r="5.6" fill="none" stroke="#111" stroke-width="1.1"/>
 <!-- lock -->
 <path d="M606.5 581v-3a4 4 0 0 1 9 0v3" fill="none" stroke="#222" stroke-width="2"/>
 <rect x="604.5" y="580.5" width="13" height="9" rx="1" fill="#444" stroke="#111" stroke-width="1"/>
 <path d="M609 583h4l-1.2 2v2.5h-1.6v-2.5z" fill="#ddd"/>
 <!-- power -->
 <rect x="629.5" y="573.5" width="14" height="15.5" fill="#ddd" stroke="#333" stroke-width="1"/>
 <path d="M633.5 577.5a4.3 4.3 0 1 0 6 0" fill="none" stroke="#000" stroke-width="1.6"/>
 <path d="M636.5 575.5v5" stroke="#000" stroke-width="1.6"/>
</svg>
<svg style="left:0;top:0" width="800" height="600" viewBox="0 0 800 600"><rect x="665.0" y="576.0" width="2.0" height="4.6" fill="#000"/><rect x="665.0" y="581.4" width="2.0" height="4.6" fill="#000"/><rect x="669.0" y="575.0" width="5.0" height="2.0" fill="#000"/><rect x="673.0" y="576.0" width="2.0" height="4.6" fill="#000"/><rect x="669.0" y="580.0" width="5.0" height="2.0" fill="#000"/><rect x="669.0" y="585.0" width="5.0" height="2.0" fill="#000"/><rect x="668.0" y="581.4" width="2.0" height="4.6" fill="#000"/><rect x="679" y="578" width="2" height="2" fill="#000"/><rect x="679" y="582" width="2" height="2" fill="#000"/><rect x="685.0" y="575.0" width="5.0" height="2.0" fill="#000"/><rect x="689.0" y="576.0" width="2.0" height="4.6" fill="#000"/><rect x="689.0" y="581.4" width="2.0" height="4.6" fill="#000"/><rect x="685.0" y="585.0" width="5.0" height="2.0" fill="#000"/><rect x="684.0" y="581.4" width="2.0" height="4.6" fill="#000"/><rect x="684.0" y="576.0" width="2.0" height="4.6" fill="#000"/><rect x="693.5" y="575.0" width="5.0" height="2.0" fill="#000"/><rect x="692.5" y="576.0" width="2.0" height="4.6" fill="#000"/><rect x="693.5" y="580.0" width="5.0" height="2.0" fill="#000"/><rect x="697.5" y="581.4" width="2.0" height="4.6" fill="#000"/><rect x="693.5" y="585.0" width="5.0" height="2.0" fill="#000"/></svg>


</body></html>
